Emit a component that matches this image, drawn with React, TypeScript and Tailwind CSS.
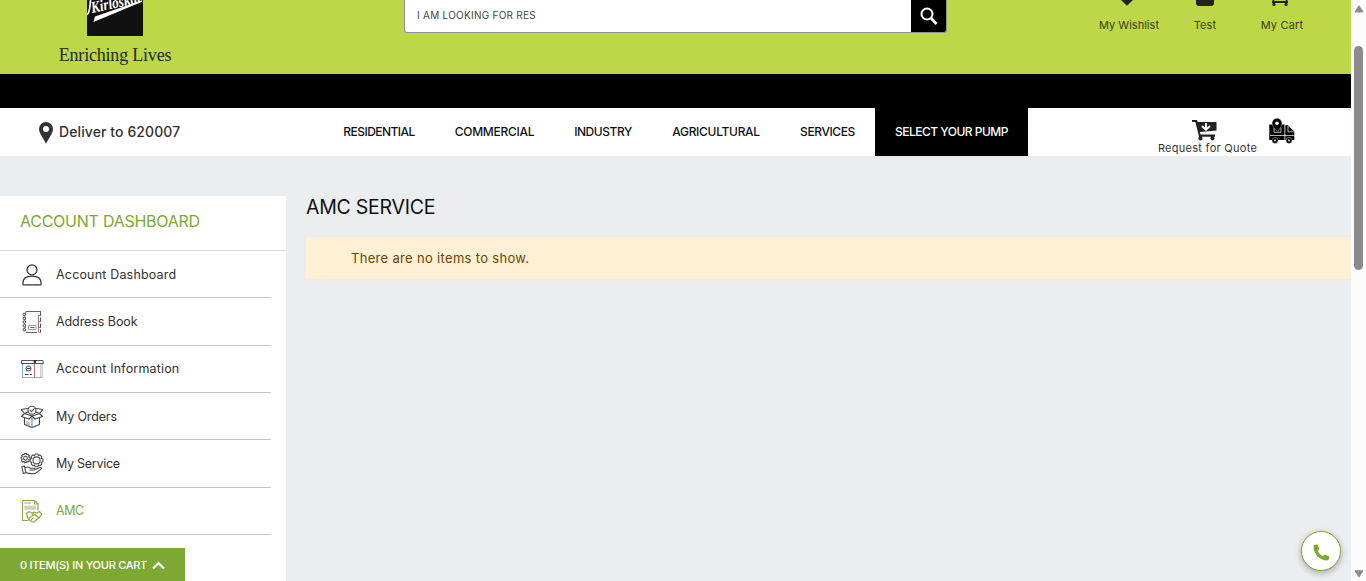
import React from "react";

const line = {
  fill: "none",
  stroke: "currentColor",
  strokeLinecap: "round" as const,
  strokeLinejoin: "round" as const,
};

function UserIcon() {
  return (
    <svg width="20" height="22" viewBox="0 0 20 22" {...line} strokeWidth="1.2">
      <circle cx="10" cy="5.800" r="5" />
      <path d="M1 20.800V19c0-4.300 3.600-6.800 9-6.800s9 2.500 9 6.800v1.800z" />
    </svg>
  );
}

function AddressBookIcon() {
  return (
    <svg width="20" height="22" viewBox="0 0 20 22" fill="none" strokeWidth="1">
      <path d="M4 .5H19M4 21.500H15" stroke="#666" />
      <path d="M3.500 .5V21.500" stroke="#888" strokeDasharray="1.500 1" />
      <g stroke="#444" strokeWidth="1">
        <circle cx="2.300" cy="3.300" r="1.300" />
        <circle cx="2.300" cy="7.200" r="1.300" />
        <circle cx="2.300" cy="11" r="1.300" />
        <circle cx="2.300" cy="14.800" r="1.300" />
        <circle cx="2.300" cy="18.600" r="1.300" />
      </g>
      <path d="M16.500 4V21.500M16.500 4.500h2.500M16.500 10.500h2.500M16.500 16.500h2.500" stroke="#a87474" />
      <path d="M18.500 .5V21.500h-3" stroke="#555" strokeDasharray="4 2" />
      <path d="M6.500 14.500h7.500v4H6.500z" stroke="#8a96b5" />
      <path d="M8 16.500h4.500" stroke="#8a6255" />
    </svg>
  );
}

function InfoIcon() {
  return (
    <svg width="24" height="20" viewBox="0 0 24 20" fill="none" strokeWidth="1">
      <path d="M2.500 4v14.500" stroke="#7fb3d2" />
      <path d="M14.500 4v14.500" stroke="#c07474" />
      <path d="M20.800 4v14.500" stroke="#e0ad86" />
      <path d="M22.300 4v14.500" stroke="#9ad8ec" />
      <path d="M2.500 18.500h20" stroke="#aaa" />
      <path d="M1.500 1.500h21.500l.3 3H1.200z" stroke="#555" />
      <path d="M14 1.500h1.500v2h-1.500z" fill="#333" stroke="#333" />
      <circle cx="8.500" cy="9.500" r="2.400" stroke="#5e7182" strokeWidth="1.100" />
      <path d="M7 9.500h3.500" stroke="#444" />
      <path d="M5 15.500h3.500M9.500 15.500h2.500" stroke="#444" />
    </svg>
  );
}

function OrdersIcon() {
  return (
    <svg width="24" height="24" viewBox="0 0 24 24" {...line} stroke="#444" strokeWidth="1.1">
      <path d="M4.500 13v6.500L12 22.500l7.500-3V13" />
      <path d="M12 11v11.500" stroke="#4c93bd" />
      <path d="M4.500 8.500 12 11l7.500-2.500M4.500 8.500 1.500 11.500l7.500 2.500 3-3 3 3 7.500-2.500-3-3" />
      <path d="M4.500 8.500 1.200 4.500 7.500 3.500M19.500 8.500l3.300-4-6.300-1M4.500 8.500 8 7M19.500 8.500 16 7" />
      <circle cx="12" cy="5.200" r="4" />
      <path d="m10 5.200 1.500 1.400 2.800-3" />
      <path d="M7 16.500v3M9 17.500v2.500" stroke="#b08a70" />
    </svg>
  );
}

function ServiceIcon() {
  return (
    <svg width="24" height="24" viewBox="0 0 24 24" {...line} stroke="#4a4a4a" strokeWidth="1.1">
      <path d="m4.500 1.500 2 0 .4 1.200 1.300-.4 1.200 1.300-.7 1.200 1.300.6v1.700l-1.300.5.6 1.300-1.300 1.200-1.200-.6-.5 1.200H4.600l-.5-1.200-1.300.6-1.200-1.200.6-1.300-1.100-.5V5.500l1.100-.6-.6-1.200 1.300-1.300 1.200.4z" />
      <circle cx="5.500" cy="6.200" r="1.900" />
      <path d="m15.300 2 2.600 0 .5 1.600 1.500-.7 1.900 1.800-.7 1.600 1.800.7v2.700l-1.800.7.7 1.600-1.900 1.800-1.500-.7-.6 1.600h-2.600l-.6-1.600-1.600.7-1.800-1.800.7-1.600-1.700-.7V7l1.700-.7-.7-1.600L13 2.900l1.600.7z" />
      <circle cx="16.600" cy="8.400" r="3.500" />
      <path d="m1.800 14.500 2.600-.5 1.600 6.800-2.800.6z" />
      <path d="M5.200 15.500c2.500-1.200 4-.5 5.500.8h3.300c1.300 0 1.300 1.700 0 1.700h-4M15.500 17.300l4.500-1.800c1.500-.3 2 1 .8 1.900l-5.300 3.900c-2 1.200-5.500.2-9.200-.5" />
    </svg>
  );
}

function AmcIcon() {
  return (
    <svg width="24" height="24" viewBox="0 0 24 24" {...line} stroke="#8fab52" strokeWidth="1.2">
      <path d="M8 21.500H2.500V1.500h12l3.500 3.500V11" />
      <path d="M14.500 1.500V5H18" />
      <path d="M5 4h5.500" />
      <path d="M5 7h10.500v3.500H5z" fill="#ced3c0" stroke="#c5cbb6" strokeWidth=".6" />
      <path d="m6.500 14.500 2.500-2 2.500 1.500 2.500-.8 2.800.8 2.500-1.500 2.500 2.500-2 3-5.800 5c-1.800.6-4.500-2-6-3.500z" />
      <path d="m14 13.500-2.200 2.700c1 1 2.500 0 3.200-.7l4 3.500M9.500 19l1.500-1.500M11.500 20.500l1.500-1.500" />
    </svg>
  );
}

function QuoteCartIcon() {
  return (
    <svg width="25" height="21" viewBox="0 0 25 21" fill="#222">
      <path d="M0 0h5l.7 2H24.500v8.500L7.800 12l.8 2.500H23v2.300h-1.200a2 2 0 1 1-2.600 0H9.800a2 2 0 1 1-2.700 0L3.300 2H0z" />
      <path d="M14 3v6M10 6l4 3.800L18 6" fill="none" stroke="#fff" strokeWidth="1.900" />
    </svg>
  );
}

function TruckIcon() {
  return (
    <svg width="26" height="26" viewBox="0 0 26 26">
      <path d="M.3 6.500H15.500V22H.3zM16.300 7.300h2.500l6.500 6.200V22h-9z" fill="#000" />
      <path d="M19 8v5.800h6" fill="none" stroke="#fff" strokeWidth=".7" />
      <path d="M1 17.500h24.500" stroke="#fff" strokeWidth=".7" />
      <path d="M5 10v4.300h7V10" fill="none" stroke="#fff" strokeWidth=".7" />
      <path d="M8 .3a5 5 0 0 1 5 5c0 3.200-4.500 8.500-4.500 8.500S3 8.500 3 5.300a5 5 0 0 1 5-5z" fill="#000" stroke="#fff" strokeWidth=".4" />
      <circle cx="8" cy="5.300" r="1.800" fill="#fff" />
      <circle cx="6" cy="22.500" r="3" fill="#000" stroke="#fff" strokeWidth=".4" />
      <circle cx="20" cy="22.500" r="3" fill="#000" stroke="#fff" strokeWidth=".4" />
      <circle cx="6" cy="22.500" r=".9" fill="#fff" />
      <circle cx="20" cy="22.500" r=".9" fill="#fff" />
    </svg>
  );
}

function Logo() {
  return (
    <div className="flex w-[112px] flex-col items-center">
      <div className="h-[36px] w-[56px] overflow-hidden bg-[#111]">
        <svg width="56" height="36" viewBox="0 0 56 36">
          <text x="5" y="13" transform="rotate(-12 5 13)" fill="#fff" fontFamily="Liberation Serif, serif" fontStyle="italic" fontWeight="700" fontSize="16" textLength="52" lengthAdjust="spacingAndGlyphs">Kirloskar</text>
          <path d="M0 14.500Q3 13 3.500-1" fill="none" stroke="#fff" strokeWidth="1.700" />
          <path d="M8 16.500 55 .2v1.600L6.500 22z" fill="#fff" />
        </svg>
      </div>
      <div className="mt-[7px] whitespace-nowrap font-['Liberation_Serif',serif] text-[18px] leading-[24px] tracking-[-0.2px] text-[#222b12]">Enriching Lives</div>
    </div>
  );
}

const nav = [
  { label: "RESIDENTIAL", cls: "w-[112px] tracking-[-0.55px]" },
  { label: "COMMERCIAL", cls: "w-[119px] tracking-[-0.28px]" },
  { label: "INDUSTRY", cls: "w-[98px] tracking-[-0.45px]" },
  { label: "AGRICULTURAL", cls: "w-[128px] tracking-[-0.3px]" },
  { label: "SERVICES", cls: "w-[95px] tracking-[-0.4px]" },
  { label: "SELECT YOUR PUMP", cls: "w-[153px] bg-black text-white tracking-[-0.5px]" },
];

const menu = [
  { label: "Account Dashboard", icon: <UserIcon />, cls: "text-[#333] tracking-[0.18px]" },
  { label: "Address Book", icon: <AddressBookIcon />, cls: "text-[#333] tracking-[-0.08px]" },
  { label: "Account Information", icon: <InfoIcon />, cls: "text-[#333] tracking-[0.17px]" },
  { label: "My Orders", icon: <OrdersIcon />, cls: "text-[#333] tracking-[-0.15px]" },
  { label: "My Service", icon: <ServiceIcon />, cls: "text-[#333] tracking-[-0.28px]" },
  { label: "AMC", icon: <AmcIcon />, cls: "text-[#7da833] tracking-[-0.4px]" },
];

function Header() {
  return (
    <header className="flex h-[74px] shrink-0 items-start bg-[#bdd746]">
      <div className="ml-[59px]"><Logo /></div>
      <div className="ml-[233px] flex h-[33px] w-[543px] overflow-hidden rounded-b-[3px] border-x border-b border-[#929292] bg-white">
        <div className="flex h-[32px] grow items-start pl-3 pt-[7px] text-[10px] leading-4 text-[#444]">
          <span className="whitespace-nowrap tracking-[0.26px]">I AM LOOKING FOR RES</span>
        </div>
        <div className="flex w-[35px] justify-center bg-black pt-[7px]">
          <svg width="18" height="19" viewBox="0 0 18 19" fill="none" stroke="#fff">
            <circle cx="7" cy="7" r="5.500" strokeWidth="2" />
            <path d="m11 11 5.500 6" strokeWidth="2.600" />
          </svg>
        </div>
      </div>
      <div className="ml-[142px] flex text-[11px] leading-4 text-[#3a4020]">
        <div className="flex w-[80px] flex-col items-center">
          <svg width="16" height="17" viewBox="0 0 16 17" className="-ml-[5px]"><path d="M0-2 8 5.800 16-2z" fill="#222" /></svg>
          <span className="whitespace-nowrap tracking-[0.02px]">My Wishlist</span>
        </div>
        <div className="flex w-[72px] flex-col items-center">
          <svg width="18" height="17" viewBox="0 0 18 17"><rect y="-8" width="18" height="14" rx="3" fill="#222" /></svg>
          <span className="tracking-[0.15px]">Test</span>
        </div>
        <div className="flex w-[82px] flex-col items-center">
          <svg width="20" height="17" viewBox="0 0 20 17" className="-ml-[4px]">
            <path d="M3.500-1v5M16.500-1v5M2 2h16" stroke="#222" strokeWidth="1.800" fill="none" />
            <circle cx="4" cy="4.500" r="1.600" fill="#222" /><circle cx="16" cy="4.500" r="1.600" fill="#222" />
          </svg>
          <span className="tracking-[0.18px]">My Cart</span>
        </div>
      </div>
    </header>
  );
}

function NavBar() {
  return (
    <nav className="flex h-12 shrink-0 bg-white">
      <div className="flex w-[323px] items-center pl-[39px]">
        <svg width="14" height="22" viewBox="0 0 14 22" className="mt-[2px]">
          <path fillRule="evenodd" d="M7 0a7 7 0 0 1 7 7c0 4.500-5 10-7 15C5 17 0 11.500 0 7a7 7 0 0 1 7-7zm0 4a3 3 0 1 0 0 6 3 3 0 0 0 0-6z" fill="#333" />
        </svg>
        <span className="-mt-px ml-[6px] whitespace-nowrap text-[14px] font-medium tracking-[0.1px] text-[#333]">Deliver to 620007</span>
      </div>
      {nav.map((n) => (
        <div key={n.label} className={`flex items-center justify-center whitespace-nowrap text-[12px] font-medium ${n.cls}`}>{n.label}</div>
      ))}
      <div className="ml-[130px] flex w-[99px] flex-col items-center pt-[12px]">
        <span className="-ml-[7px] h-[21px]"><QuoteCartIcon /></span>
        <span className="whitespace-nowrap text-[11px] leading-[14px] tracking-[0.28px] text-[#333]">Request for Quote</span>
      </div>
      <div className="ml-[12px] pt-[10px]"><TruckIcon /></div>
    </nav>
  );
}

export default function App() {
  return (
    <div className="relative flex h-[581px] w-[1366px] overflow-hidden bg-[#ebedef] font-[Inter,sans-serif] text-[#111]">
      <div className="flex w-[1351px] shrink-0 flex-col">
        <Header />
        <div className="h-[34px] shrink-0 bg-black" />
        <NavBar />
        <div className="flex grow pt-10">
          <aside className="w-[286px] shrink-0 bg-white">
            <div className="flex h-[55px] items-center border-b border-[#ddd] pb-[4px] pl-[20px] text-[16px] tracking-[-0.25px] text-[#7da833]">
              <span className="whitespace-nowrap">ACCOUNT DASHBOARD</span>
            </div>
            {menu.map((m) => (
              <div key={m.label} className={`flex h-[47.330px] w-[271px] items-center border-b border-[#c6c6c6] pl-[20px] text-[12.500px] ${m.cls}`}>
                <span className="mt-px flex w-6 justify-center">{m.icon}</span>
                <span className="ml-3 mt-[2px] whitespace-nowrap">{m.label}</span>
              </div>
            ))}
          </aside>
          <main className="ml-5 grow">
            <h1 className="h-[41px] text-[19.500px] leading-[23px] tracking-[-0.25px] text-[#111]">AMC SERVICE</h1>
            <div className="flex h-[42px] items-center bg-[#fdf0d5] pl-[45px] pt-[2px] text-[13px] tracking-[0.32px] text-[#6f4400]">There are no items to show.</div>
          </main>
        </div>
      </div>
      <div className="flex w-[15px] shrink-0 flex-col items-center bg-[#fcfcfc]">
        <svg width="10" height="8" viewBox="0 0 10 8" className="mt-[5px]"><path d="M5 .8 9 7H1z" fill="#8b8b8b" stroke="#8b8b8b" strokeLinejoin="round" /></svg>
        <div className="mt-[33px] h-[224px] w-[9px] rounded-full bg-[#8b8b8b]" />
        <svg width="10" height="8" viewBox="0 0 10 8" className="mb-[3px] mt-auto"><path d="M5 7 9 .8H1z" fill="#8b8b8b" stroke="#8b8b8b" strokeLinejoin="round" /></svg>
      </div>
      <div className="absolute bottom-0 left-0 flex h-[33px] w-[185px] items-center bg-[#7da833] pl-5 pt-px text-[11px] font-medium tracking-[-0.28px] text-white">
        <span className="w-[127px] whitespace-nowrap">0 ITEM(S) IN YOUR CART</span>
        <svg width="13" height="9" viewBox="0 0 13 9" className="ml-[5px]"><path d="m1 7.500 5.500-5.500L12 7.500" fill="none" stroke="#fff" strokeWidth="2.200" /></svg>
      </div>
      <div className="absolute left-[1301px] top-[531px] flex h-10 w-10 items-center justify-center rounded-full border border-[#7da833] bg-white shadow-[0_2px_6px_rgba(0,0,0,0.3)]">
        <svg width="17" height="17" viewBox="0 0 17 17" className="mt-[2px]">
          <path d="M1.800.8 4.300.3l2 4.500L4.700 7c1.100 2.300 2.600 3.800 5 5l2.200-1.600 4.500 2-.5 2.700c-.2.900-.8 1.300-1.700 1.300C6.500 16.400.6 10.400.6 2.500c0-.9.400-1.500 1.200-1.700z" fill="#7da833" />
        </svg>
      </div>
    </div>
  );
}
